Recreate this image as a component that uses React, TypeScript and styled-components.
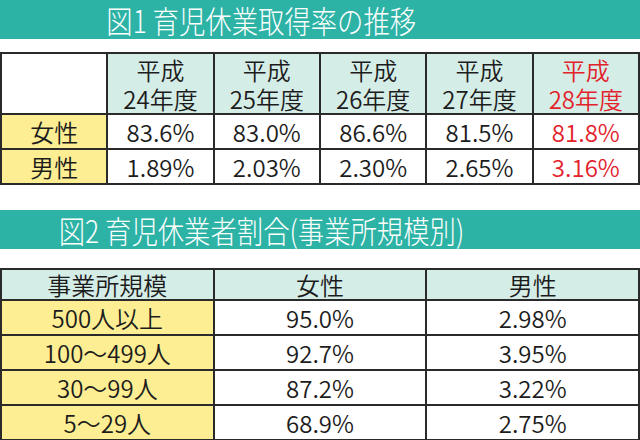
import React from "react";
import styled, { createGlobalStyle } from "styled-components";

const Global = createGlobalStyle`
  html, body { margin: 0; padding: 0; background: #ffffff; }
  body {
    width: 640px; height: 440px; overflow: hidden;
    font-family: "Noto Sans CJK JP", "Noto Sans", sans-serif;
    color: #1c1c1c;
  }
`;

const Page = styled.div`
  width: 640px;
  height: 440px;
  display: flex;
  flex-direction: column;
`;

const TitleBar = styled.div<{ $mt: number; $mb: number }>`
  height: 39px;
  margin-top: ${(p) => p.$mt}px;
  margin-bottom: ${(p) => p.$mb}px;
  background: #2db3a6;
  color: #ffffff;
  display: flex;
  align-items: center;
  justify-content: center;
  padding-right: 118px;
`;

const TitleText = styled.span`
  display: inline-block;
  font-size: 31px;
  line-height: 39px;
  font-weight: 300;
  white-space: pre;
  transform: scaleX(0.85);
`;

const Grid = styled.div<{ $cols: number }>`
  display: grid;
  grid-template-columns: repeat(${(p) => p.$cols}, 1fr);
  gap: 2px;
  padding: 2px;
  background: #2a2a2a;
`;

type Tone = "white" | "head" | "label";

const Cell = styled.div<{ $tone: Tone; $h: number; $red?: boolean }>`
  height: ${(p) => p.$h}px;
  background: ${(p) =>
    p.$tone === "head" ? "#d5ede7" : p.$tone === "label" ? "#fdee93" : "#ffffff"};
  color: ${(p) => (p.$red ? "#e3222b" : "#1c1c1c")};
  display: flex;
  flex-direction: column;
  align-items: center;
  justify-content: center;
  font-size: 24px;
  font-weight: 350;
  line-height: 29px;
  white-space: nowrap;
`;

const Line = styled.span`
  display: block;
  height: 29px;
  line-height: 29px;
`;

const years = ["24", "25", "26", "27", "28"];
const women = ["83.6%", "83.0%", "86.6%", "81.5%", "81.8%"];
const men = ["1.89%", "2.03%", "2.30%", "2.65%", "3.16%"];

const sizes: [string, string, string][] = [
  ["500人以上", "95.0%", "2.98%"],
  ["100〜499人", "92.7%", "3.95%"],
  ["30〜99人", "87.2%", "3.22%"],
  ["5〜29人", "68.9%", "2.75%"],
];

export default function App() {
  return (
    <Page>
      <Global />
      <TitleBar $mt={0} $mb={13}>
        <TitleText>図1 育児休業取得率の推移</TitleText>
      </TitleBar>
      <Grid $cols={6}>
        <Cell $tone="white" $h={59} />
        {years.map((y, i) => (
          <Cell key={y} $tone="head" $h={59} $red={i === 4}>
            <Line>平成</Line>
            <Line>{y}年度</Line>
          </Cell>
        ))}
        <Cell $tone="label" $h={33}>女性</Cell>
        {women.map((v, i) => (
          <Cell key={v + i} $tone="white" $h={33} $red={i === 4}>{v}</Cell>
        ))}
        <Cell $tone="label" $h={33}>男性</Cell>
        {men.map((v, i) => (
          <Cell key={v + i} $tone="white" $h={33} $red={i === 4}>{v}</Cell>
        ))}
      </Grid>
      <TitleBar $mt={25} $mb={19}>
        <TitleText>図2 育児休業者割合(事業所規模別)</TitleText>
      </TitleBar>
      <Grid $cols={3}>
        <Cell $tone="head" $h={29}>事業所規模</Cell>
        <Cell $tone="head" $h={29}>女性</Cell>
        <Cell $tone="head" $h={29}>男性</Cell>
        {sizes.map(([label, w, m]) => (
          <React.Fragment key={label}>
            <Cell $tone="label" $h={33}>{label}</Cell>
            <Cell $tone="white" $h={33}>{w}</Cell>
            <Cell $tone="white" $h={33}>{m}</Cell>
          </React.Fragment>
        ))}
      </Grid>
    </Page>
  );
}
